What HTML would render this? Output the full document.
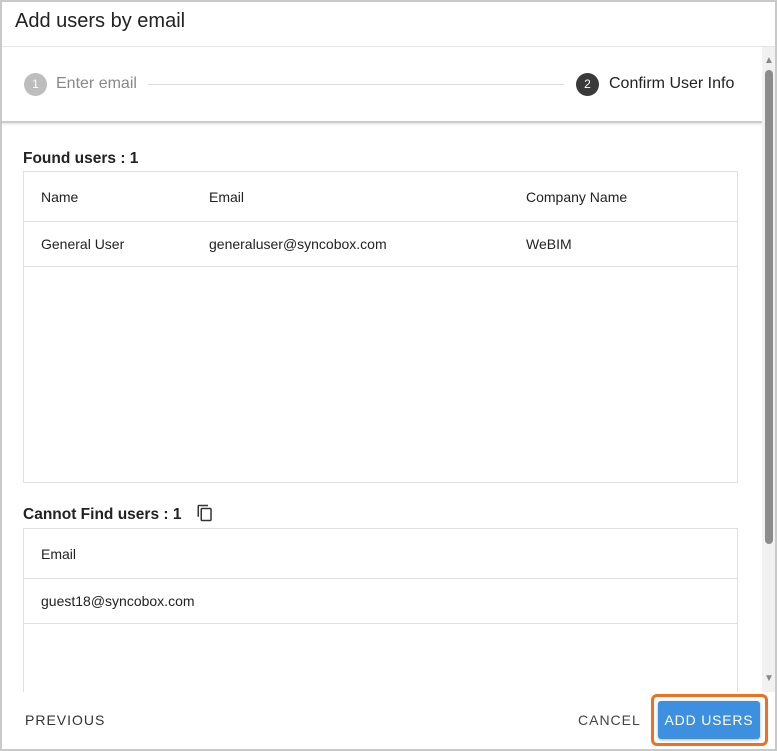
<html><head><style>
body{margin:0;width:777px;height:751px;overflow:hidden;font-family:"Liberation Sans",sans-serif;background:#fff;}
.frame{position:absolute;left:0;top:0;width:773px;height:747px;border:2px solid #c9c9c9;border-top-width:2px;background:#fff;}
.t{position:absolute;white-space:nowrap;}
.box{position:absolute;left:23px;width:713px;border:1px solid #e0e0e0;}
.row{position:absolute;left:0;right:0;border-bottom:1px solid #e0e0e0;}
.cell{position:absolute;font-size:14px;color:#222;}
</style></head><body>
<div class="frame"></div>
<div class="t" style="left:15px;top:10px;font-size:20px;color:#222">Add users by email</div>
<div style="position:absolute;left:2px;right:2px;top:46px;height:1px;background:#e6e6e6"></div>
<div style="position:absolute;left:24px;top:73px;width:23px;height:23px;border-radius:50%;background:#bdbdbd;color:#fff;font-size:12px;text-align:center;line-height:23px">1</div>
<div class="t" style="left:56px;top:75px;font-size:16px;color:#888">Enter email</div>
<div style="position:absolute;left:148px;width:416px;top:84px;height:1px;background:#ddd"></div>
<div style="position:absolute;left:576px;top:73px;width:23px;height:23px;border-radius:50%;background:#3a3a3a;color:#fff;font-size:12px;text-align:center;line-height:23px">2</div>
<div class="t" style="left:609px;top:75px;font-size:16px;color:#222">Confirm User Info</div>
<div style="position:absolute;left:2px;width:760px;top:121px;height:2px;background:#ccc;box-shadow:0 1px 2px rgba(0,0,0,.15)"></div>
<div style="position:absolute;left:762px;top:47px;width:13px;height:645px;background:#f1f1f1"></div>
<div style="position:absolute;left:765px;top:70px;width:8px;height:474px;background:#8c8c8c;border-radius:4px"></div>
<div class="t" style="left:764px;top:55px;font-size:10px;color:#888">▲</div>
<div class="t" style="left:764px;top:673px;font-size:10px;color:#888">▼</div>
<div class="t" style="left:23px;top:150px;font-size:15.5px;font-weight:bold;color:#222">Found users : 1</div>
<div class="box" style="top:171px;height:310px">
<div class="row" style="top:0;height:49px"><span class="cell" style="left:17px;top:17px">Name</span><span class="cell" style="left:185px;top:17px">Email</span><span class="cell" style="left:502px;top:17px">Company Name</span></div>
<div class="row" style="top:50px;height:44px"><span class="cell" style="left:17px;top:14px">General User</span><span class="cell" style="left:185px;top:14px">generaluser@syncobox.com</span><span class="cell" style="left:502px;top:14px">WeBIM</span></div>
</div>
<div class="t" style="left:23px;top:506px;font-size:15.5px;font-weight:bold;color:#222">Cannot Find users : 1</div>
<svg style="position:absolute;left:196px;top:503px" width="18" height="20" viewBox="0 0 24 24"><path fill="#333" d="M16 1H4c-1.1 0-2 .9-2 2v14h2V3h12V1zm3 4H8c-1.1 0-2 .9-2 2v14c0 1.1.9 2 2 2h11c1.1 0 2-.9 2-2V7c0-1.1-.9-2-2-2zm0 16H8V7h11v14z"/></svg>
<div class="box" style="top:528px;height:180px;border-bottom:none">
<div class="row" style="top:0;height:49px"><span class="cell" style="left:17px;top:17px">Email</span></div>
<div class="row" style="top:50px;height:44px"><span class="cell" style="left:17px;top:14px">guest18@syncobox.com</span></div>
</div>
<div style="position:absolute;left:2px;width:760px;top:692px;height:57px;background:#fff"></div>
<div class="t" style="left:25px;top:712px;font-size:14px;letter-spacing:1px;color:#333">PREVIOUS</div>
<div class="t" style="left:578px;top:712px;font-size:14px;letter-spacing:1px;color:#444">CANCEL</div>
<div style="position:absolute;left:651px;top:694px;width:111px;height:46px;border:3px solid #f07020;border-radius:6px"></div>
<div style="position:absolute;left:658px;top:701px;width:102px;height:38px;background:#3d8fe0;border-radius:3px;box-shadow:0 1px 3px rgba(0,0,0,.3);color:#fff;font-size:14px;letter-spacing:.8px;text-align:center;line-height:38px">ADD USERS</div>
</body></html>
